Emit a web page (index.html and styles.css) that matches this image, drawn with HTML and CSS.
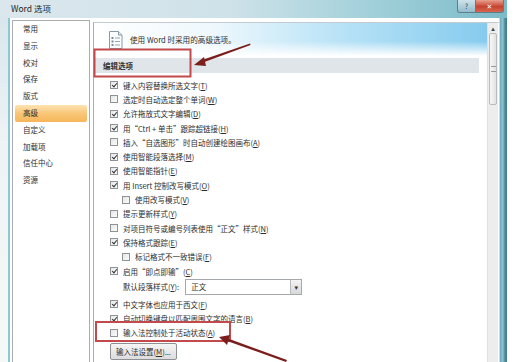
FILE: index.html
```html
<!DOCTYPE html>
<html lang="zh-CN">

<head>
    <meta charset="UTF-8">
    <title>Word 选项</title>
    <link rel="stylesheet" href="styles.css">
</head>

<body>
    <div class="window">
        <div class="titlebar">
            <span class="title">Word 选项</span>
            <div class="caption-btns">
                <span class="btn-help">?</span>
                <span class="btn-close">✕</span>
            </div>
        </div>

        <div class="client">
            <ul class="nav">
                <li>常用</li>
                <li>显示</li>
                <li>校对</li>
                <li>保存</li>
                <li>版式</li>
                <li class="active">高级</li>
                <li>自定义</li>
                <li>加载项</li>
                <li>信任中心</li>
                <li>资源</li>
            </ul>

            <div class="main">
                <div class="content">
                    <div class="banner">
                        <svg class="banner-icon" width="17" height="18" viewBox="0 0 17 18">
                            <path d="M2.5 0.5h9l3.5 3.5v13.5h-12.5z" fill="#fbfcfd" stroke="#8a98a6" />
                            <path d="M11.5 0.5v3.5h3.5" fill="#e4eaf0" stroke="#8a98a6" />
                            <rect x="4.5" y="6" width="2" height="2" fill="#7b8b9b" />
                            <rect x="4.5" y="9.5" width="2" height="2" fill="#7b8b9b" />
                            <rect x="4.5" y="13" width="2" height="2" fill="#7b8b9b" />
                            <path d="M8 7h5M8 10.5h5M8 14h5" stroke="#9aa7b4" />
                        </svg>
                        <span>使用 Word 时采用的高级选项。</span>
                    </div>

                    <div class="section-title">编辑选项</div>

                    <div class="options">
                        <div class="opt"><span class="cb checked"></span>键入内容替换所选文字(<u>T</u>)</div>
                        <div class="opt"><span class="cb"></span>选定时自动选定整个单词(<u>W</u>)</div>
                        <div class="opt"><span class="cb checked"></span>允许拖放式文字编辑(<u>D</u>)</div>
                        <div class="opt"><span class="cb checked"></span>用“Ctrl + 单击”跟踪超链接(<u>H</u>)</div>
                        <div class="opt"><span class="cb"></span>插入“自选图形”时自动创建绘图画布(<u>A</u>)</div>
                        <div class="opt"><span class="cb checked"></span>使用智能段落选择(<u>M</u>)</div>
                        <div class="opt"><span class="cb checked"></span>使用智能指针(<u>E</u>)</div>
                        <div class="opt"><span class="cb checked"></span>用 Insert 控制改写模式(<u>O</u>)</div>
                        <div class="opt sub"><span class="cb"></span>使用改写模式(<u>V</u>)</div>
                        <div class="opt"><span class="cb"></span>提示更新样式(<u>Y</u>)</div>
                        <div class="opt"><span class="cb"></span>对项目符号或编号列表使用“正文”样式(<u>N</u>)</div>
                        <div class="opt"><span class="cb checked"></span>保持格式跟踪(<u>E</u>)</div>
                        <div class="opt sub"><span class="cb"></span>标记格式不一致错误(<u>F</u>)</div>
                        <div class="opt"><span class="cb checked"></span>启用“即点即输”(<u>C</u>)</div>
                        <div class="select-row">
                            <span>默认段落样式(<u>Y</u>):</span>
                            <div class="select"><span class="select-value">正文</span><span class="select-btn">▾</span></div>
                        </div>
                        <div class="opt gap"><span class="cb checked"></span>中文字体也应用于西文(<u>F</u>)</div>
                        <div class="opt"><span class="cb checked"></span>自动切换键盘以匹配周围文字的语言(<u>B</u>)</div>
                        <div class="opt"><span class="cb"></span>输入法控制处于活动状态(<u>A</u>)</div>
                        <div class="btn-row"><span class="push-btn">输入法设置(<u>M</u>)...</span></div>
                    </div>
                </div>

                <div class="scrollbar">
                    <div class="sb-up">▴</div>
                    <div class="sb-thumb"><span class="grip"></span></div>
                </div>
            </div>
            <div class="frame-right"></div>
        </div>
    </div>

    <svg class="marks" width="530" height="362" viewBox="0 0 530 362">
        <rect x="94.5" y="49.5" width="96" height="27" fill="none" stroke="#c2494c" stroke-width="2" />
        <rect x="96" y="322" width="134" height="19" fill="none" stroke="#c2494c" stroke-width="2" />
        <polygon points="250,43.5 250.6,45 203,62.5 202,60" fill="#7d1e1e" />
        <polygon points="194,65 204,57 206,66" fill="#7d1e1e" />
        <polygon points="287,360 286,362 227,341 228,338.5" fill="#7d1e1e" />
        <polygon points="219,337 230,335 227,345" fill="#7d1e1e" />
    </svg>
</body>

</html>
```

FILE: styles.css
```css
body {
    margin: 0;
    width: 530px;
    height: 362px;
    overflow: hidden;
    position: relative;
    background: #fff;
    font-family: "Noto Sans CJK SC", "DejaVu Sans", sans-serif;
    color: #2c2c2c;
}

.window {
    width: 507px;
    height: 362px;
    display: flex;
    flex-direction: column;
    background: linear-gradient(to bottom, #d6e5ec, #eef3f5 40%, #f6f8f8);
}

.titlebar {
    height: 18px;
    flex: none;
    display: flex;
    align-items: flex-start;
    justify-content: space-between;
    background: linear-gradient(to right, #dbe7ed 0%, #cfe2e9 45%, #9fcfd9 75%, #7bbac7 100%);
}

.title {
    font-size: 8.5px;
    line-height: 17px;
    padding-left: 11px;
    color: #1e1e1e;
}

.caption-btns {
    display: flex;
    margin-right: 3px;
}

.caption-btns span {
    height: 12px;
    line-height: 12px;
    font-size: 7px;
    text-align: center;
    color: #fff;
    border: 1px solid #5c7f8a;
    border-top: none;
}

.btn-help {
    width: 17px;
    background: linear-gradient(to bottom, #cfe3ea, #93bccb);
    border-radius: 0 0 0 3px;
    color: #2d4d5a !important;
}

.btn-close {
    width: 27px;
    background: linear-gradient(to bottom, #e8a08e, #c5432f 55%, #d8664e);
    border-left: none !important;
    border-radius: 0 0 3px 0;
}

.client {
    flex: 1;
    display: flex;
    margin-left: 8px;
    border-left: 2px solid #8ccad3;
    background: #fff;
    min-height: 0;
}

.nav {
    list-style: none;
    margin: 2px 0 0 2px;
    padding: 0 2px;
    width: 72px;
    border: 1px solid #a9adb0;
    border-bottom: none;
}

.nav li {
    height: 16.8px;
    line-height: 16.8px;
    font-size: 7.5px;
    padding-left: 8px;
}

.nav li.active {
    background: linear-gradient(to bottom, #fde3b2, #f9c678 50%, #f6b65a);
    border-radius: 2px;
}

.main {
    flex: 1;
    display: flex;
    margin: 4px 0 0 3px;
    border-left: 1px solid #a9adb0;
    border-top: 1px solid #c4cbd0;
}

.content {
    flex: 1;
}

.banner {
    height: 33px;
    display: flex;
    align-items: center;
    gap: 6px;
    padding-left: 13px;
    font-size: 7.6px;
    color: #2f2f2f;
    background:
        linear-gradient(to bottom, rgba(255, 255, 255, 0) 55%, #fff 100%),
        linear-gradient(to right, #fff 0%, #eef8fd 30%, #b5e1f6 65%, #86cbee 100%);
}

.section-title {
    height: 15px;
    line-height: 15px;
    margin: 2px 8px 0 1px;
    padding-left: 8px;
    font-size: 7.5px;
    font-weight: bold;
    color: #333;
    background: #dfe5e9;
}

.options {
    padding: 5px 0 0 16px;
    font-size: 7.5px;
}

.opt {
    height: 14.3px;
    display: flex;
    align-items: center;
}

.opt.sub {
    padding-left: 12px;
}

.opt.gap {
    margin-top: 2px;
}

.cb {
    width: 8px;
    height: 8px;
    box-sizing: border-box;
    border: 1px solid #8f9396;
    background: linear-gradient(135deg, #e4e6e8, #fbfbfb);
    margin-right: 5px;
    position: relative;
}

.cb.checked::after {
    content: "";
    position: absolute;
    left: 1.6px;
    top: 0;
    width: 2px;
    height: 4px;
    border: solid #333;
    border-width: 0 1.2px 1.2px 0;
    transform: rotate(40deg);
}

u {
    text-decoration: underline;
    text-underline-offset: 1px;
}

.select-row {
    height: 17px;
    display: flex;
    align-items: center;
    padding-left: 13px;
}

.select {
    display: flex;
    width: 117px;
    height: 16px;
    margin-left: 6px;
    box-sizing: border-box;
    border: 1px solid #a4a8ab;
}

.select-value {
    flex: 1;
    line-height: 14px;
    padding-left: 5px;
}

.select-btn {
    width: 10px;
    line-height: 14px;
    text-align: center;
    font-size: 7px;
    color: #333;
    background: linear-gradient(to bottom, #f4f4f4, #d8d8d8);
    border-left: 1px solid #b8bbbd;
}

.btn-row {
    margin-top: 3px;
}

.push-btn {
    display: inline-block;
    height: 15px;
    line-height: 15px;
    padding: 0 5px;
    border: 1px solid #8d9194;
    border-radius: 2px;
    background: linear-gradient(to bottom, #f5f5f5, #dcdcdc);
}

.scrollbar {
    width: 10px;
    margin-right: 1px;
    background: #ededed;
    border-left: 1px solid #e0e0e0;
    display: flex;
    flex-direction: column;
}

.sb-up {
    height: 10px;
    font-size: 7px;
    line-height: 10px;
    text-align: center;
    color: #444;
}

.sb-thumb {
    height: 70px;
    margin: 0 1px;
    border: 1px solid #b9bcbf;
    border-radius: 2px;
    background: linear-gradient(to right, #f7f7f7, #e2e2e2);
    display: flex;
    align-items: center;
    justify-content: center;
}

.grip {
    width: 5px;
    height: 4px;
    border-top: 1px solid #999;
    border-bottom: 1px solid #999;
}

.frame-right {
    width: 7px;
    border-left: 1px solid #c8d8ef;
    background: linear-gradient(to right, #6fa9b8, #8cc4cf 40%, #4f8a9b 70%, #3f7a8b);
}

.marks {
    position: absolute;
    left: 0;
    top: 0;
}
```
